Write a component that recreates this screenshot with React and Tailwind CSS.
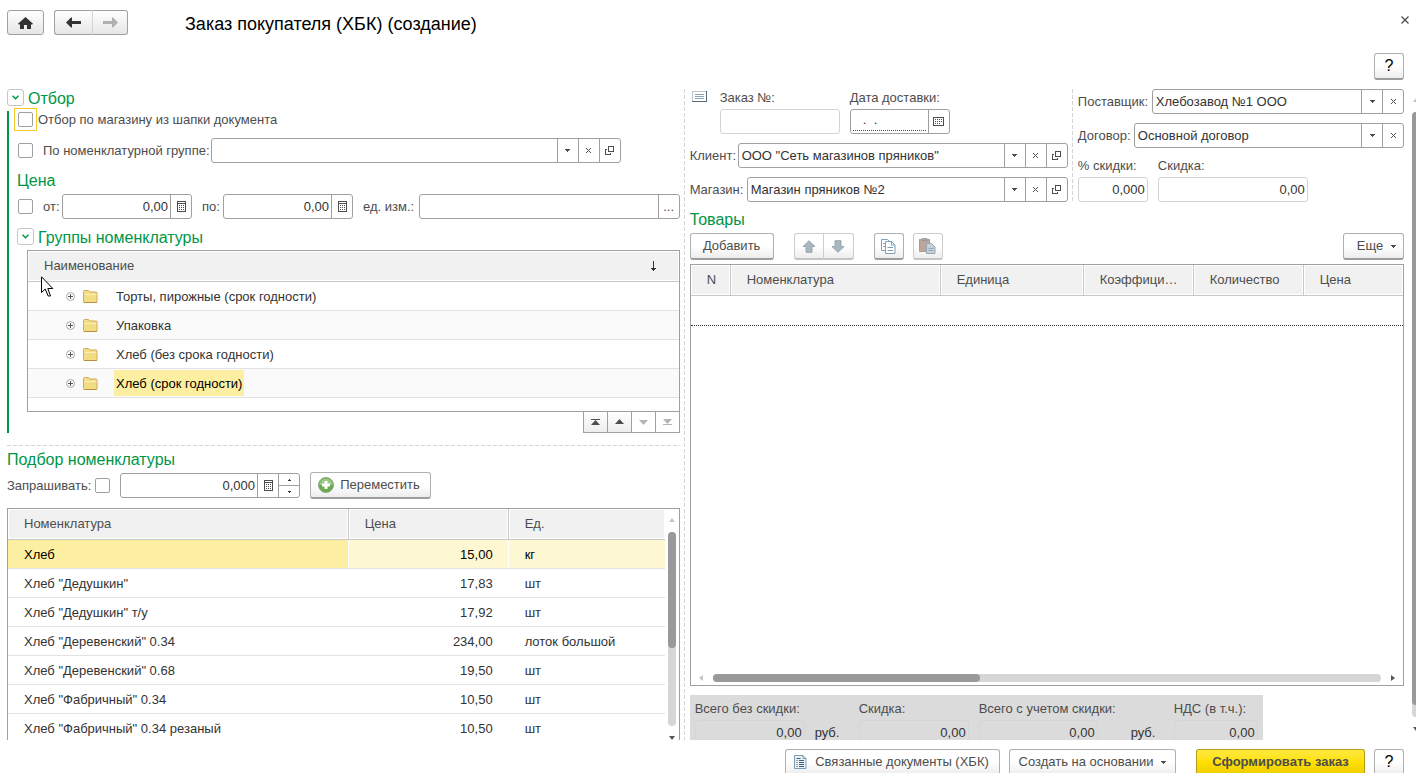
import { useState } from "react";

const groups = ["Торты, пирожные (срок годности)", "Упаковка", "Хлеб (без срока годности)", "Хлеб (срок годности)"];

const products = [
  { name: "Хлеб", price: "15,00", unit: "кг" },
  { name: 'Хлеб "Дедушкин"', price: "17,83", unit: "шт" },
  { name: 'Хлеб "Дедушкин" т/у', price: "17,92", unit: "шт" },
  { name: 'Хлеб "Деревенский" 0.34', price: "234,00", unit: "лоток большой" },
  { name: 'Хлеб "Деревенский" 0.68', price: "19,50", unit: "шт" },
  { name: 'Хлеб "Фабричный" 0.34', price: "10,50", unit: "шт" },
  { name: 'Хлеб "Фабричный" 0.34 резаный', price: "10,50", unit: "шт" },
];

const DownIcon = () => (
  <svg width="5" height="3" viewBox="0 0 5 3" fill="currentColor" shapeRendering="crispEdges">
    <path d="M0 0h5v1h-1v1h-1v1h-1v-1h-1v-1h-1z" />
  </svg>
);

const ClearIcon = () => (
  <svg width="5" height="5" viewBox="0 0 5 5" fill="currentColor" shapeRendering="crispEdges">
    <path d="M0 0h1v1h-1zM4 0h1v1h-1zM1 1h1v1h-1zM3 1h1v1h-1zM2 2h1v1h-1zM1 3h1v1h-1zM3 3h1v1h-1zM0 4h1v1h-1zM4 4h1v1h-1z" />
  </svg>
);

const OpenIcon = () => (
  <svg width="9" height="9" viewBox="0 0 9 9" fill="none" stroke="currentColor" shapeRendering="crispEdges">
    <path d="M3.5 .5h5v5h-5zM2 3.5h-1.500v5h5v-1.500" />
  </svg>
);

const CalcIcon = () => (
  <svg width="9" height="11" viewBox="0 0 9 11" fill="none" stroke="currentColor" shapeRendering="crispEdges">
    <path d="M.5 .5h8v10h-8zM1 2.500h7" />
    <path d="M2 4.500h5M2 6.500h5M2 8.500h5" strokeDasharray="1 1" />
  </svg>
);

const CalendarIcon = () => (
  <svg width="11" height="9" viewBox="0 0 11 9" fill="none" stroke="currentColor" shapeRendering="crispEdges">
    <path d="M.5 .5h10v8h-10z" />
    <path d="M2 2.500h7M2 4.500h7M2 6.500h5" strokeDasharray="1 1" />
  </svg>
);

const TriangleIcon = ({ className, bar }) => (
  <svg width="9" height="6" viewBox="0 0 9 6" fill="currentColor" className={className}>
    <path d={bar ? "M0 0h9v1h-9zM4.500 1L9 6H0z" : "M4.500 0L9 5H0z"} />
  </svg>
);

const FolderIcon = () => (
  <svg width="15" height="13" viewBox="0 0 15 13">
    <path d="M.5 11.500V1.500q0-1 1-1h4l1.500 1.500h6q1 0 1 1v8.500q0 1-1 1h-11.500q-1 0-1-1z" fill="#f3dd84" stroke="#d0ab5c" />
    <path d="M1.500 4.500h12" stroke="#fbf0b9" />
    <path d="M1 12.500h13" stroke="#b98f45" />
  </svg>
);

const PlusCircleIcon = () => (
  <svg width="9" height="9" viewBox="0 0 9 9" fill="none">
    <circle cx="4.500" cy="4.500" r="4" stroke="#a8a8a8" />
    <path d="M2 4.500h5M4.500 2v5" stroke="#555" />
  </svg>
);

const IconButton = ({ label, children, className = "" }) => (
  <button type="button" aria-label={label} className={`flex w-[21px] shrink-0 items-center justify-center border-l border-[#a0a0a0] text-[#4d4d4d] ${className}`}>
    {children}
  </button>
);

const Field = ({ id, label, value = "", right, muted, className = "", inputClass = "", children }) => (
  <div className={`flex h-[25px] min-w-0 rounded-[3px] border bg-white ${muted ? "border-[#d4d4d4]" : "border-[#a0a0a0]"} ${className}`}>
    <input id={id} type="text" aria-label={label} defaultValue={value} readOnly={muted} className={`min-w-0 flex-1 bg-transparent text-[#333] outline-none ${right ? "pr-[2px] text-right" : "pl-[3px]"} ${inputClass}`} />
    {children}
  </div>
);

const ComboButtons = ({ open }) => (
  <>
    <IconButton label="Выбрать"><DownIcon /></IconButton>
    <IconButton label="Очистить"><ClearIcon /></IconButton>
    {open && <IconButton label="Открыть"><OpenIcon /></IconButton>}
  </>
);

const variants = {
  plain: "h-[27px] border-b-2 border-[#b0b0b0] border-b-[#9c9c9c] bg-linear-to-b from-white from-50% to-[#ededed] text-[#4d4d4d]",
  disabled: "h-[27px] border-b-2 border-[#cdcdcd] border-b-[#c4c4c4] bg-linear-to-b from-white from-50% to-[#ededed]",
  nav: "h-[25px] border-[#a0a0a0] bg-linear-to-b from-white to-[#e6e6e6]",
  help: "h-[27px] border-b-2 border-[#b0b0b0] border-b-[#9c9c9c] bg-linear-to-b from-white from-50% to-[#ededed] text-[16px] text-black",
  main: "h-[27px] border-b-2 border-[#b59f1a] border-b-[#a08c10] bg-linear-to-b from-[#ffea3c] via-[#ffe000] to-[#efcf00] font-bold text-[#4d4d4d]",
};

const Button = ({ children, variant = "plain", className = "", ...rest }) => (
  <button type="button" className={`flex shrink-0 items-center justify-center rounded-[3px] border ${variants[variant]} ${className}`} {...rest}>
    {children}
  </button>
);

const CheckBox = ({ id, label }) => (
  <input id={id} type="checkbox" aria-label={label} className="size-[15px] shrink-0 appearance-none rounded-[2px] border border-[#a0a0a0] bg-white checked:bg-[#009646]" />
);

const Collapse = ({ label }) => (
  <button type="button" aria-label={label} className="flex size-[17px] items-center justify-center rounded-[3px] border border-[#c6c6c6] bg-white text-[#009646]">
    <svg width="7" height="5" viewBox="0 0 7 5" fill="none" stroke="currentColor" strokeWidth="1.500">
      <path d="M.5 .75L3.500 3.750L6.500 .75" />
    </svg>
  </button>
);

const Heading = ({ children, className = "" }) => <h2 className={`text-[16px] leading-5 whitespace-nowrap text-[#009646] ${className}`}>{children}</h2>;

const Th = ({ children, className = "" }) => (
  <th className={`h-[31px] truncate border-b border-[#c8c8c8] bg-[#f1f1f1] pr-3 pl-4 text-left font-normal text-[#4d4d4d] shadow-[inset_0_0_0_1px_#fff] ${className}`}>{children}</th>
);

const Filter = () => (
  <section>
    <div className="flex h-5 items-start gap-1 pt-px">
      <Collapse label="Свернуть отбор" />
      <Heading>Отбор</Heading>
    </div>
    <div className="flex">
      <div className="mt-[3px] w-[2px] shrink-0 bg-[#009646]" />
      <div className="min-w-0 flex-1">
        <div className="flex items-center gap-px pl-[5px]">
          <span className="flex size-[23px] items-center justify-center border border-[#f5c92c]">
            <CheckBox id="byStore" />
          </span>
          <label htmlFor="byStore" className="pt-px">Отбор по магазину из шапки документа</label>
        </div>

        <div className="mt-[7px] flex items-center pl-[9px]">
          <CheckBox id="byGroup" label="Включить отбор по группе" />
          <label htmlFor="group" className="ml-[10px] w-[168px] shrink-0">По номенклатурной группе:</label>
          <Field id="group" className="mr-[59px] flex-1"><ComboButtons open /></Field>
        </div>

        <Heading className="mt-2 pl-2">Цена</Heading>
        <div className="mt-[3px] flex items-center pl-[9px]">
          <CheckBox id="byPrice" label="Включить отбор по цене" />
          <label htmlFor="from" className="ml-[10px] w-[19px] shrink-0">от:</label>
          <Field id="from" value="0,00" right className="w-[130px]">
            <IconButton label="Калькулятор"><CalcIcon /></IconButton>
          </Field>
          <label htmlFor="to" className="ml-[10px] w-[21px] shrink-0">по:</label>
          <Field id="to" value="0,00" right className="w-[130px]">
            <IconButton label="Калькулятор"><CalcIcon /></IconButton>
          </Field>
          <label htmlFor="measure" className="ml-[10px] w-[56px] shrink-0">ед. изм.:</label>
          <Field id="measure" className="flex-1">
            <IconButton label="Выбрать единицу">...</IconButton>
          </Field>
        </div>

        <div className="mt-2 flex h-5 items-start gap-1 pt-px pl-2">
          <Collapse label="Свернуть группы" />
          <Heading>Группы номенклатуры</Heading>
        </div>
        <GroupTree />
      </div>
    </div>
  </section>
);

const GroupTree = () => {
  const [selected, setSelected] = useState(3);

  return (
    <div className="relative mt-[3px] ml-[18px]">
      <div className="h-[162px] border border-[#a0a0a0]">
        <table className="w-full table-fixed border-separate border-spacing-0">
          <thead>
            <tr>
              <Th>
                <span className="flex items-center justify-between">
                  Наименование
                  <svg width="5" height="10" viewBox="0 0 5 10" fill="#333" className="mr-[11px]" shapeRendering="crispEdges">
                    <path d="M2 0h1v7h2v1h-1v1h-1v1h-1v-1h-1v-1h-1v-1h2z" />
                  </svg>
                </span>
              </Th>
            </tr>
          </thead>
          <tbody>
            {groups.map((group, index) => (
              <tr key={group} onClick={() => setSelected(index)} className="even:bg-[#fafafa]">
                <td className="h-[29px] border-b border-[#e2e2e2] pl-[38px]">
                  <span className="flex items-center">
                    <PlusCircleIcon />
                    <span className="mr-4 ml-2"><FolderIcon /></span>
                    <span className={`px-[2px] pt-px leading-[25px] ${index === selected ? "bg-[#fdefa1] text-black" : "text-[#333]"}`}>{group}</span>
                  </span>
                </td>
              </tr>
            ))}
          </tbody>
        </table>
      </div>
      <div className="-mt-px flex justify-end">
        <div className="flex h-[22px] border border-l-0 border-[#a0a0a0] text-[#333]">
          <IconButton label="В начало" className="w-[24px] bg-linear-to-b from-white to-[#eee]"><TriangleIcon bar /></IconButton>
          <IconButton label="Вверх" className="w-[24px] bg-linear-to-b from-white to-[#eee]"><TriangleIcon /></IconButton>
          <IconButton label="Вниз" className="w-[24px]"><TriangleIcon className="rotate-180 text-[#b5b5b5]" /></IconButton>
          <IconButton label="В конец" className="w-[24px]"><TriangleIcon bar className="rotate-180 text-[#b5b5b5]" /></IconButton>
        </div>
      </div>
      <svg width="13" height="21" viewBox="0 0 13 21" className="absolute top-[26px] left-[14px]">
        <path d="M.5 .8V16.500L4.200 13L7.200 20H9.500L6.800 12.500H11.800z" fill="#fff" stroke="#000" />
      </svg>
    </div>
  );
};

const Selection = () => {
  const [selected, setSelected] = useState(0);

  return (
    <section>
      <Heading className="mt-1">Подбор номенклатуры</Heading>
      <div className="mt-[2px] flex items-center">
        <label htmlFor="ask" className="w-[88px]">Запрашивать:</label>
        <CheckBox id="ask" />
        <Field label="Количество" value="0,000" right className="ml-[10px] w-[180px]">
          <IconButton label="Калькулятор"><CalcIcon /></IconButton>
          <div className="flex w-[21px] flex-col border-l border-[#a0a0a0]">
            <button type="button" aria-label="Больше" className="flex flex-1 items-center justify-center border-b border-[#a0a0a0]">
              <svg width="3" height="2" viewBox="0 0 3 2" fill="#333" shapeRendering="crispEdges"><path d="M1 0h1v1h1v1h-3v-1h1z" /></svg>
            </button>
            <button type="button" aria-label="Меньше" className="flex flex-1 items-center justify-center">
              <svg width="3" height="2" viewBox="0 0 3 2" fill="#333" shapeRendering="crispEdges"><path d="M0 0h3v1h-1v1h-1v-1h-1z" /></svg>
            </button>
          </div>
        </Field>
        <Button className="ml-[10px] w-[121px] gap-[6px] pr-[3px]">
          <svg width="16" height="16" viewBox="0 0 16 16">
            <circle cx="8" cy="8" r="7.500" fill="#69ab48" stroke="#8fa888" />
            <path d="M1.500 8a6.500 6.500 0 0 1 13 0z" fill="#9cc985" />
            <path d="M6.500 4h3v2.500H12v3H9.500V12h-3V9.500H4v-3h2.500z" fill="#fff" />
          </svg>
          Переместить
        </Button>
      </div>

      <div className="mt-[9px] flex border border-b-0 border-[#a0a0a0]">
        <table className="min-w-0 flex-1 table-fixed border-separate border-spacing-0">
          <colgroup>
            <col />
            <col className="w-[160px]" />
            <col className="w-[156px]" />
          </colgroup>
          <thead>
            <tr>
              <Th className="border-r">Номенклатура</Th>
              <Th className="border-r">Цена</Th>
              <Th>Ед.</Th>
            </tr>
          </thead>
          <tbody>
            {products.map((product, index) => {
              const active = index === selected;
              return (
                <tr key={product.name} onClick={() => setSelected(index)} className={active ? "text-black" : "text-[#333]"}>
                  <td className={`h-[29px] border-b border-[#e2e2e2] px-4 pt-px ${active ? "bg-[#fdefa1] shadow-[inset_-1px_0_0_#fff]" : ""}`}>{product.name}</td>
                  <td className={`border-b border-[#e2e2e2] px-4 pt-px text-right ${active ? "bg-[#fdf7d2] shadow-[inset_-1px_0_0_#fff]" : ""}`}>{product.price}</td>
                  <td className={`border-b border-[#e2e2e2] px-4 pt-px ${active ? "bg-[#fdf7d2]" : ""}`}>{product.unit}</td>
                </tr>
              );
            })}
          </tbody>
        </table>
        <div className="flex w-[14px] flex-col items-center">
          <svg width="6" height="4" viewBox="0 0 6 4" fill="#c4c4c4" className="mt-[9px] mb-[10px]"><path d="M3 0L6 4H0z" /></svg>
          <div className="w-2 flex-1 rounded-full bg-[#d6d6d6]">
            <div className="h-3/5 rounded-full bg-[#999]" />
          </div>
          <svg width="6" height="4" viewBox="0 0 6 4" fill="#555" className="mt-[10px] mb-[3px]"><path d="M3 4L6 0H0z" /></svg>
        </div>
      </div>
    </section>
  );
};

const OrderHeader = () => (
  <section className="flex pt-px">
    <div className="flex-[378_1_0%]">
      <div className="flex">
        <svg width="16" height="12" viewBox="0 0 16 12" fill="none" className="mt-[2px] mr-[12px] ml-[2px]" shapeRendering="crispEdges">
          <path d="M.5 .5h14v10h-14z" fill="#fff" stroke="#b9c8d2" />
          <path d="M3 3.500h9M3 5.500h9M3 7.500h9" stroke="#8aa3b5" />
          <path d="M14.500 0v11M0 10.500h15" stroke="#5a6a76" />
        </svg>
        <div className="w-[120px]">
          <label htmlFor="orderNumber" className="block leading-[18px]">Заказ №:</label>
          <Field id="orderNumber" muted className="mt-[2px]" />
        </div>
        <div className="ml-[10px] w-[100px]">
          <label htmlFor="deliveryDate" className="block leading-[18px]">Дата доставки:</label>
          <Field id="deliveryDate" value="  .  ." className="mt-[2px]" inputClass="mx-[2px] mb-[2px] border-b border-dotted border-[#f00]">
            <IconButton label="Календарь"><CalendarIcon /></IconButton>
          </Field>
        </div>
      </div>
      <div className="mt-[9px] flex items-center">
        <label htmlFor="client" className="w-[48px] shrink-0">Клиент:</label>
        <Field id="client" value={'ООО "Сеть магазинов пряников"'} className="flex-1"><ComboButtons open /></Field>
      </div>
      <div className="mt-[9px] flex items-center">
        <label htmlFor="store" className="w-[57px] shrink-0">Магазин:</label>
        <Field id="store" value="Магазин пряников №2" className="flex-1"><ComboButtons open /></Field>
      </div>
    </div>
    <div className="mr-[5px] ml-1 w-px bg-[repeating-linear-gradient(to_bottom,#d4d4d4_0_4px,transparent_4px_6px)]" />
    <div className="flex-[326_1_0%]">
      <div className="flex items-center">
        <label htmlFor="supplier" className="w-[74px] shrink-0">Поставщик:</label>
        <Field id="supplier" value="Хлебозавод №1 ООО" className="flex-1"><ComboButtons /></Field>
      </div>
      <div className="mt-[9px] flex items-center">
        <label htmlFor="contract" className="w-[56px] shrink-0">Договор:</label>
        <Field id="contract" value="Основной договор" className="flex-1"><ComboButtons /></Field>
      </div>
      <div className="mt-[9px] flex gap-[10px]">
        <div className="w-[70px]">
          <label htmlFor="percent" className="block leading-[18px]">% скидки:</label>
          <Field id="percent" value="0,000" right muted className="mt-[2px]" />
        </div>
        <div className="w-[150px]">
          <label htmlFor="discount" className="block leading-[18px]">Скидка:</label>
          <Field id="discount" value="0,00" right muted className="mt-[2px]" />
        </div>
      </div>
    </div>
  </section>
);

const Goods = () => (
  <section>
    <Heading className="mt-2">Товары</Heading>
    <div className="mt-[3px] flex">
      <Button className="w-[84px]">Добавить</Button>
      <div className="ml-5 flex">
        <Button variant="disabled" disabled aria-label="Вверх" className="w-[30px] rounded-r-none">
          <svg width="14" height="13" viewBox="0 0 14 13" fill="#a9b8c0" stroke="#96a6af"><path d="M7 .7L13 6.500H10V12.300H4V6.500H1z" /></svg>
        </Button>
        <Button variant="disabled" disabled aria-label="Вниз" className="-ml-px w-[31px] rounded-l-none">
          <svg width="14" height="13" viewBox="0 0 14 13" fill="#a9b8c0" stroke="#96a6af"><path d="M7 12.300L13 6.500H10V.7H4V6.500H1z" /></svg>
        </Button>
      </div>
      <Button aria-label="Копировать" className="ml-5 w-[30px]">
        <svg width="15" height="15" viewBox="0 0 15 15" fill="#fff" stroke="#7fa0b8">
          <path d="M.5 .5h6l2 2v9h-8z" />
          <path d="M2 4.500h2M2 7.500h2" />
          <path d="M4.500 2.500h6l3.500 3.500v8.500h-9.500z" />
          <path d="M10.500 2.500v3.500h3.500M6.500 8.500h5.500M6.500 11.500h5.500" fill="none" />
        </svg>
      </Button>
      <Button variant="disabled" disabled aria-label="Вставить" className="ml-[9px] w-[30px]">
        <svg width="17" height="16" viewBox="0 0 17 16">
          <path d="M.5 1.500h10v12h-10z" fill="#bca69a" stroke="#b09a8e" />
          <path d="M2.500 2.500V1q3-1.500 6 0v1.500z" fill="#aaa" stroke="#999" />
          <path d="M7.500 5.500h5l3.500 3.500v6.500h-8.500z" fill="#c6d1d8" stroke="#94a7b3" />
          <path d="M9.500 10.500h5M9.500 12.500h5" stroke="#94a7b3" />
        </svg>
      </Button>
      <Button className="ml-auto w-[61px] gap-2 pl-[6px]">Еще <DownIcon /></Button>
    </div>

    <div className="mt-1 flex h-[422px] flex-col justify-between border border-[#a0a0a0]">
      <table className="w-full table-fixed border-separate border-spacing-0">
        <colgroup>
          <col className="w-[40px]" />
          <col className="w-[210px]" />
          <col className="w-[143px]" />
          <col className="w-[110px]" />
          <col className="w-[110px]" />
          <col />
        </colgroup>
        <thead>
          <tr>
            <Th className="border-r">N</Th>
            <Th className="border-r">Номенклатура</Th>
            <Th className="border-r">Единица</Th>
            <Th className="border-r">Коэффициент</Th>
            <Th className="border-r">Количество</Th>
            <Th>Цена</Th>
          </tr>
        </thead>
        <tbody>
          <tr>
            <td colSpan={6} className="h-[30px] border-b border-dotted border-[#333]" />
          </tr>
        </tbody>
      </table>
      <div className="flex h-[15px] items-center px-2">
        <svg width="4" height="6" viewBox="0 0 4 6" fill="#c4c4c4"><path d="M0 3L4 0V6z" /></svg>
        <div className="mx-[10px] h-2 flex-1 rounded-full bg-[#d6d6d6]">
          <div className="h-2 w-2/5 rounded-full bg-[#999]" />
        </div>
        <svg width="4" height="6" viewBox="0 0 4 6" fill="#555"><path d="M4 3L0 0V6z" /></svg>
      </div>
    </div>
  </section>
);

const Total = ({ id, label, className }) => (
  <div className={className}>
    <label htmlFor={id} className="block leading-[18px] whitespace-nowrap">{label}</label>
    <input id={id} type="text" defaultValue="0,00" readOnly className="mt-[2px] h-[25px] w-full rounded-[3px] border border-[#d5d5d5] pr-[2px] text-right text-[#333]" />
  </div>
);

const Totals = () => (
  <section className="mt-[9px] flex w-[573px] bg-[#dbdbdb] px-[5px] pt-[5px] pb-3">
    <Total id="totalFull" label="Всего без скидки:" className="w-[110px]" />
    <span className="mt-5 ml-[10px] w-[44px] leading-[25px] text-[#333]">руб.</span>
    <Total id="totalDiscount" label="Скидка:" className="w-[110px]" />
    <Total id="totalNet" label="Всего с учетом скидки:" className="ml-[10px] w-[119px]" />
    <span className="mt-5 ml-[33px] w-[43px] leading-[25px] text-[#333]">руб.</span>
    <Total id="totalVat" label="НДС (в т.ч.):" className="w-[84px]" />
  </section>
);

const App = () => {
  return (
    <div className="flex h-screen flex-col overflow-hidden bg-white font-['Liberation_Sans',Arial,sans-serif] text-[13px] leading-[18px] text-[#4d4d4d]">
      <header className="mt-[10px] flex h-[25px] shrink-0 items-center px-[7px]">
        <Button variant="nav" aria-label="Домой" className="w-[37px]">
          <svg width="15" height="12" viewBox="0 0 15 12" fill="#333"><path d="M7.500 0L15 6.700L14.200 7.500H13V12H9V8H6V12H2V7.500H.8L0 6.700z" /></svg>
        </Button>
        <Button variant="nav" aria-label="Назад" className="ml-[10px] w-[38px] rounded-r-none border-r-0">
          <svg width="15" height="11" viewBox="0 0 15 11" fill="#333"><path d="M0 5.500L5 .5H6V4H15V7H6V10.500H5z" /></svg>
        </Button>
        <Button variant="nav" disabled aria-label="Вперед" className="w-[36px] rounded-l-none border-l-[#d4d4d4]">
          <svg width="15" height="11" viewBox="0 0 15 11" fill="#b0b0b0"><path d="M15 5.500L10 .5H9V4H0V7H9V10.500H10z" /></svg>
        </Button>
        <h1 className="ml-[57px] pt-[2px] text-[18px] leading-6 text-black">Заказ покупателя (ХБК) (создание)</h1>
        <button type="button" aria-label="Закрыть" className="ml-auto self-start py-[6px]">
          <svg width="8" height="8" viewBox="0 0 8 8" stroke="#4d4d4d" strokeWidth="1.300"><path d="M.5 .5L7.500 7.500M7.500 .5L.5 7.500" /></svg>
        </button>
      </header>

      <div className="mt-[18px] flex shrink-0 justify-end pr-3">
        <Button variant="help" aria-label="Справка" className="w-[30px]">?</Button>
      </div>

      <main className="mt-2 flex min-h-0 flex-1 overflow-hidden pl-[7px]">
        <div className="min-w-0 flex-[677_1_0%] pr-1">
          <Filter />
          <div className="mt-3 h-px bg-[repeating-linear-gradient(to_right,#d4d4d4_0_4px,transparent_4px_6px)]" />
          <Selection />
        </div>
        <div className="mt-px w-px shrink-0 bg-[repeating-linear-gradient(to_bottom,#d4d4d4_0_4px,transparent_4px_6px)]" />
        <div className="min-w-0 flex-[719_1_0%] pl-[5px]">
          <OrderHeader />
          <Goods />
          <Totals />
        </div>
        <div className="flex w-3 shrink-0 flex-col items-end overflow-hidden">
          <svg width="3" height="4" viewBox="0 0 3 4" fill="#c4c4c4" className="mt-[10px] mb-[10px]"><path d="M3 0V4H0z" /></svg>
          <div className="w-1 flex-1 rounded-l-full bg-[#d6d6d6]">
            <div className="h-[98%] rounded-l-full bg-[#999]" />
          </div>
          <svg width="3" height="4" viewBox="0 0 3 4" fill="#555" className="mt-[10px] mb-[9px]"><path d="M0 0H3V4z" /></svg>
        </div>
      </main>

      <footer className="flex h-[33px] shrink-0 justify-end gap-[9px] overflow-hidden pt-[9px] pr-3">
        <Button className="w-[215px] gap-2 pr-[2px]">
          <svg width="13" height="14" viewBox="0 0 13 14" fill="none">
            <path d="M.5 .5h8.500l3 3v10h-11.500z" fill="#eaf2f7" stroke="#7d9bb0" />
            <path d="M9 .5v3h3" stroke="#7d9bb0" />
            <path d="M2.500 3.500h4M2.500 5.500h1M5 5.500h5M2.500 7.500h1M5 7.500h5M2.500 9.500h1M5 9.500h5M2.500 11.500h1M5 11.500h5" stroke="#3f5f78" />
          </svg>
          Связанные документы (ХБК)
        </Button>
        <Button className="w-[167px] gap-2">Создать на основании <DownIcon /></Button>
        <Button variant="main" className="ml-[11px] w-[169px]">Сформировать заказ</Button>
        <Button variant="help" aria-label="Справка" className="w-[30px]">?</Button>
      </footer>
    </div>
  );
};

export default App;
